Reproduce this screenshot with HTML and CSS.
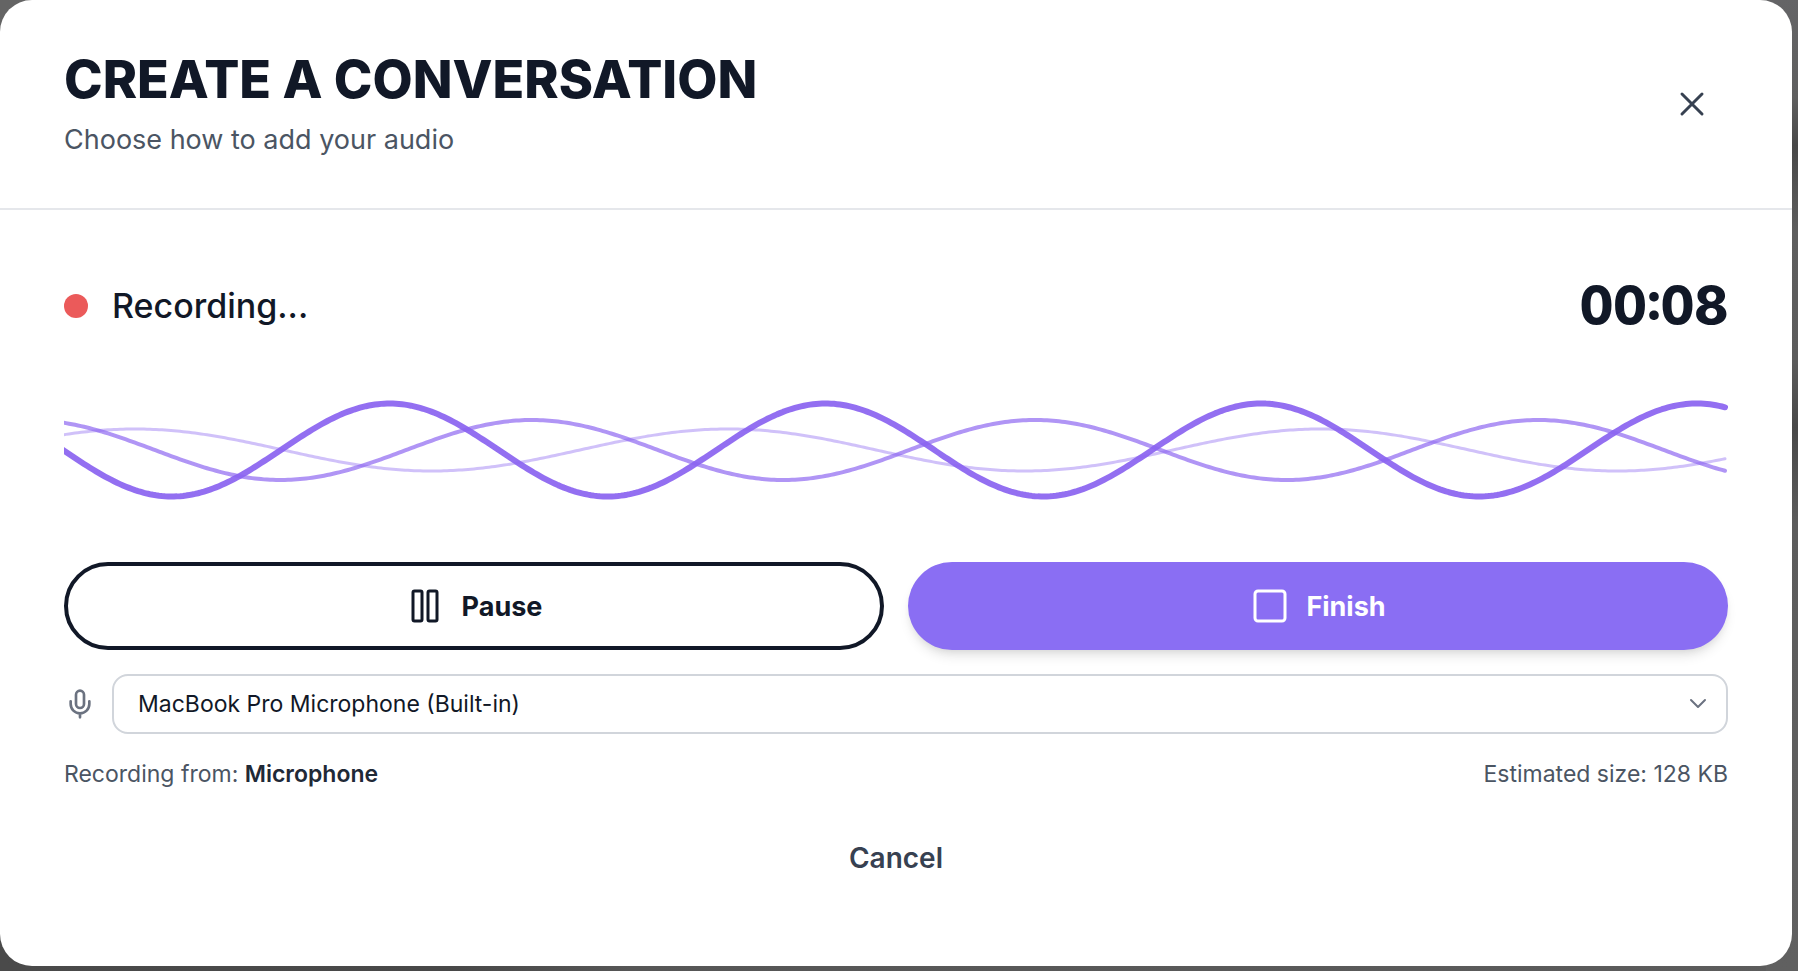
FILE: index.html
```html
<!DOCTYPE html>
<html lang="en">
<head>
<meta charset="utf-8">
<title>Create a conversation</title>
<link rel="stylesheet" href="styles.css">
</head>
<body>
<main class="dialog" role="dialog" aria-labelledby="dialog-title">
  <header class="header">
    <div class="heading">
      <h1 class="title" id="dialog-title">CREATE A CONVERSATION</h1>
      <p class="subtitle">Choose how to add your audio</p>
    </div>
    <button class="close" type="button" aria-label="Close">
      <svg class="icon-lg" viewBox="0 0 40 40"><path d="M10 10l20 20M30 10L10 30"/></svg>
    </button>
  </header>
  <section class="body">
    <div class="status">
      <div class="state"><span class="dot"></span><span>Recording...</span></div>
      <div class="timer">00:08</div>
    </div>
    <svg class="waves" viewBox="0 0 1664 128" preserveAspectRatio="none" aria-hidden="true">
      <path class="wave wave-back" data-amp="21" data-period="593" data-peak="71"/>
      <path class="wave wave-mid" data-amp="30" data-period="503" data-peak="468"/>
      <path class="wave wave-front" data-amp="46.5" data-period="435.7" data-peak="325.7"/>
    </svg>
    <div class="actions">
      <button class="btn btn-outline" type="button">
        <svg class="icon-lg" viewBox="0 0 40 40"><rect x="7" y="5" width="9" height="30" rx="1.5"/><rect x="22" y="5" width="9" height="30" rx="1.5"/></svg>
        Pause
      </button>
      <button class="btn btn-primary" type="button">
        <svg class="icon-lg" viewBox="0 0 40 40"><rect x="5" y="5" width="30" height="30" rx="3"/></svg>
        Finish
      </button>
    </div>
    <div class="device">
      <label class="device-label" for="mic" aria-label="Microphone">
        <svg class="icon-mic" viewBox="0 0 24 24"><path d="M12 2a3 3 0 0 0-3 3v7a3 3 0 0 0 6 0V5a3 3 0 0 0-3-3Z"/><path d="M19 10v2a7 7 0 0 1-14 0v-2M12 19v3"/></svg>
      </label>
      <div class="select-wrap">
        <select class="select" id="mic"><option>MacBook Pro Microphone (Built-in)</option></select>
        <svg class="chevron" viewBox="0 0 20 12"><path d="M3 2l7 7 7-7"/></svg>
      </div>
    </div>
    <div class="meta">
      <span>Recording from: <strong class="source">Microphone</strong></span>
      <span>Estimated size: 128 KB</span>
    </div>
    <button class="cancel" type="button">Cancel</button>
  </section>
</main>
<script src="waves.js"></script>
</body>
</html>
```
FILE: styles.css
```css
* { box-sizing: border-box; }

body {
  margin: 0;
  min-height: 100vh;
  padding: 0 6px 5px 0;
  background:
    linear-gradient(180deg, #646466, #5f5f5f 10%, #484848 15%, #5e5e5e 24%, #5c5c5c 37%, #484848 44%, #5c5c5c 54%, #606060) right / 32px 100% no-repeat,
    linear-gradient(90deg, #4a4a4a, #484848 25%, #565656 35%, #5c5c5c) bottom / 100% 50% no-repeat,
    #646464;
  font-family: Inter, "Liberation Sans", sans-serif;
  color: #111827;
}

button, select { font: inherit; color: inherit; cursor: pointer; }
svg { fill: none; stroke: currentColor; stroke-linecap: round; stroke-linejoin: round; }

.dialog { background: #fff; border-radius: 32px; overflow: hidden; }

.header {
  display: flex;
  align-items: center;
  justify-content: space-between;
  padding: 48px 64px;
  border-bottom: 2px solid #e5e7eb;
}
.heading { display: flex; flex-direction: column; gap: 8px; }
.title { margin: 0; font-size: 52px; line-height: 64px; font-weight: 800; }
.subtitle { margin: 0; font-size: 27px; line-height: 40px; color: #4b5563; }
.close {
  display: flex;
  padding: 16px;
  border: 0;
  border-radius: 50%;
  background: none;
  color: #374151;
}
.icon-lg { width: 40px; height: 40px; stroke-width: 3; }

.body { display: flex; flex-direction: column; gap: 24px; padding: 64px; }

.status { display: flex; align-items: center; justify-content: space-between; }
.state { display: flex; align-items: center; gap: 24px; font-size: 34px; line-height: 56px; font-weight: 500; }
.dot { width: 24px; height: 24px; border-radius: 50%; background: #eb5a5a; }
.timer { font-size: 52px; line-height: 64px; font-weight: 800; font-variant-numeric: tabular-nums; }

.waves { display: block; width: 100%; height: 128px; margin: 24px 0; overflow: hidden; }
.wave { stroke: #8a63f0; }
.wave-back { stroke-width: 3; opacity: 0.4; }
.wave-mid { stroke-width: 4; opacity: 0.68; }
.wave-front { stroke-width: 6; opacity: 0.92; }

.actions { display: grid; grid-template-columns: 1fr 1fr; gap: 24px; }
.btn {
  display: flex;
  align-items: center;
  justify-content: center;
  gap: 16px;
  height: 88px;
  border: 0;
  border-radius: 44px;
  font-size: 27px;
  font-weight: 700;
}
.btn-outline { border: 4px solid #111827; background: #fff; }
.btn-primary { background: #8a6ef3; color: #fff; box-shadow: 0 8px 12px -2px rgba(0, 0, 0, 0.1), 0 4px 8px -4px rgba(0, 0, 0, 0.1); }

.device { display: flex; align-items: center; gap: 16px; }
.device-label { display: flex; color: #6b7280; }
.icon-mic { width: 32px; height: 32px; stroke-width: 2; }
.select-wrap { position: relative; flex: 1; }
.select {
  display: block;
  width: 100%;
  height: 60px;
  padding: 0 64px 0 24px;
  border: 2px solid #d1d5db;
  border-radius: 16px;
  appearance: none;
  background: #fff;
  font-size: 23px;
}
.chevron {
  position: absolute;
  right: 20px;
  top: 24px;
  width: 20px;
  height: 12px;
  color: #6b7280;
  stroke-width: 2;
  pointer-events: none;
}

.meta { display: flex; justify-content: space-between; font-size: 23px; line-height: 32px; color: #4b5563; }
.source { font-weight: 600; color: #1f2937; }

.cancel { height: 88px; border: 0; background: none; font-size: 28px; font-weight: 600; color: #374151; }
```
FILE: waves.js
```js
// Traces each sine wave across the 1664-unit wide canvas.
document.querySelectorAll('.wave').forEach(function (path) {
  var amp = Number(path.dataset.amp);
  var period = Number(path.dataset.period);
  var peak = Number(path.dataset.peak);
  var points = [];
  for (var x = -4; x <= 1661; x += 3) {
    points.push(x + ' ' + (64 - amp * Math.cos(2 * Math.PI * (x - peak) / period)).toFixed(2));
  }
  path.setAttribute('d', 'M' + points.join('L'));
});
```
